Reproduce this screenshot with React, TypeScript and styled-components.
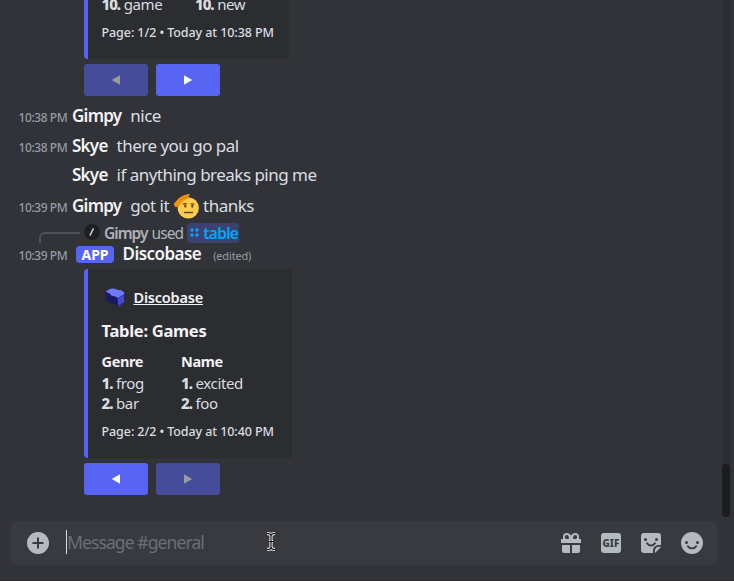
import React from 'react';
import styled, { createGlobalStyle } from 'styled-components';

const GlobalStyle = createGlobalStyle`
  * { box-sizing: border-box; }
  body {
    margin: 0;
    background: #323338;
    color: #dbdee1;
    font-family: "Noto Sans", "Open Sans", sans-serif;
  }
  svg { display: block; flex: none; }
`;

const Page = styled.div`
  display: flex;
  flex-direction: column;
  width: 734px;
  height: 581px;
  overflow: hidden;
  border-bottom: 1px solid #33252e;
`;

const Feed = styled.div`
  display: flex;
  height: 517px;
  flex: none;
`;

const Messages = styled.main`
  width: 722px;
  display: flex;
  flex-direction: column;
`;

const ScrollTrack = styled.div`
  width: 8px;
  display: flex;
  align-items: flex-end;
  background: #2c2d32;
  border-radius: 0 0 4px 4px;
`;

const ScrollThumb = styled.div`
  width: 8px;
  height: 53px;
  border-radius: 4px;
  background: #1b1c1f;
`;

const MessageRow = styled.div<{ $height: number }>`
  display: flex;
  align-items: baseline;
  height: ${(p) => p.$height}px;
  line-height: ${(p) => p.$height}px;
  white-space: nowrap;
`;

const Timestamp = styled.time`
  width: 72px;
  flex: none;
  padding-left: 18.5px;
  font-size: 12px;
  font-weight: 500;
  letter-spacing: -0.42px;
  color: #949ba4;
`;

const Author = styled.span<{ $tracking?: number }>`
  margin-right: 9px;
  font-size: 17px;
  font-weight: 600;
  letter-spacing: ${(p) => p.$tracking ?? -0.75}px;
  color: #f2f3f5;
`;

const Body = styled.span`
  font-size: 17px;
  letter-spacing: -0.52px;
`;

const ReplyRow = styled.div`
  display: flex;
  align-items: center;
  height: 20px;
  padding-left: 39px;
  line-height: 20px;
  font-size: 15.5px;
  white-space: nowrap;
  color: #aeb2b8;
`;

const ReplySpine = styled.div`
  align-self: flex-end;
  width: 41px;
  height: 11px;
  margin: 0 4px -1px 0;
  border: solid #4e5058;
  border-width: 2px 0 0 2px;
  border-radius: 6px 0 0 0;
`;

const ReplyText = styled.span<{ $strong?: boolean }>`
  padding-top: 2px;
  font-weight: ${(p) => (p.$strong ? 600 : 400)};
  letter-spacing: ${(p) => (p.$strong ? -1 : -0.85)}px;
  margin-left: 4px;
`;

const Command = styled.span`
  display: flex;
  align-items: center;
  gap: 4px;
  width: 52px;
  height: 20px;
  margin: 1px 0 0 4px;
  padding-left: 3px;
  border-radius: 3px;
  background: #3c4270;
  color: #00a8fc;
  font-weight: 600;
  letter-spacing: -0.75px;
`;

const AppTag = styled.span`
  width: 38px;
  height: 17px;
  margin: 0 8.5px 0 4px;
  border-radius: 4px;
  background: #5865f2;
  color: #fff;
  font-size: 14px;
  font-weight: 700;
  line-height: 17px;
  text-align: center;
`;

const Edited = styled.span`
  margin-left: 3px;
  font-size: 11px;
  letter-spacing: -0.15px;
  color: #949ba4;
`;

const Card = styled.section<{ $width: number; $height: number; $continued?: boolean }>`
  display: flex;
  flex: none;
  flex-direction: column;
  justify-content: flex-end;
  width: ${(p) => p.$width}px;
  height: ${(p) => p.$height}px;
  margin: ${(p) => (p.$continued ? 0 : 4)}px 0 0 84px;
  padding: 0 0 8px 13.5px;
  border-left: 4px solid #5865f2;
  border-radius: ${(p) => (p.$continued ? '0 0 4px 4px' : '4px')};
  background: #2c2d31;
  white-space: nowrap;
`;

const CardAuthor = styled.div`
  display: flex;
  align-items: center;
  gap: 9px;
  height: 23px;
  padding-left: 3px;
  line-height: 23px;
`;

const CardLink = styled.a`
  font-size: 14.5px;
  font-weight: 600;
  letter-spacing: -0.2px;
  color: #f2f3f5;
  text-decoration: underline;
  text-decoration-thickness: 1px;
  text-underline-offset: 1px;
`;

const CardTitle = styled.h2`
  margin: 0;
  font-size: 16.5px;
  font-weight: 700;
  line-height: 43px;
  letter-spacing: -0.28px;
  color: #f2f3f5;
`;

const Fields = styled.div<{ $column: number }>`
  display: grid;
  grid-template-columns: ${(p) => p.$column}px auto;
`;

const FieldName = styled.div`
  margin-bottom: 2px;
  font-size: 14.5px;
  font-weight: 700;
  line-height: 19px;
  letter-spacing: -0.35px;
  color: #f2f3f5;
`;

const Entry = styled.div`
  height: 20px;
  font-size: 15px;
  line-height: 20px;
  letter-spacing: -0.35px;
`;

const Ordinal = styled.b`
  margin-right: 3.5px;
  font-weight: 800;
  letter-spacing: -1px;
`;

const CardFooter = styled.div`
  height: 37px;
  font-size: 12.5px;
  font-weight: 500;
  line-height: 38px;
  letter-spacing: -0.08px;
`;

const Pager = styled.div<{ $gap: number }>`
  display: flex;
  gap: 8px;
  margin: 5px 0 ${(p) => p.$gap}px 84px;
`;

const PagerButton = styled.button`
  display: flex;
  align-items: center;
  justify-content: center;
  width: 64px;
  height: 32px;
  padding: 0;
  border: 0;
  border-radius: 3px;
  background: #5865f2;
  color: #fff;
  &:disabled { background: #454c9a; color: #9a9b9f; }
`;

const Composer = styled.div`
  display: flex;
  align-items: center;
  flex: none;
  width: 708px;
  height: 44px;
  margin: 4px 0 0 10px;
  padding: 0 15px 0 17px;
  border-radius: 8px;
  background: #383a40;
  color: #b5bac1;
`;

const Caret = styled.span`
  width: 1px;
  height: 24px;
  margin: -2px 0 0 17px;
  background: #dbdee1;
`;

const Placeholder = styled.span`
  width: 199px;
  margin-top: -3px;
  font-size: 17.5px;
  line-height: 24px;
  letter-spacing: -0.9px;
  white-space: nowrap;
  color: #6b6e76;
`;

const Pointer = styled.span`
  margin-top: -4px;
`;

const Actions = styled.div`
  display: flex;
  align-items: center;
  gap: 20px;
  margin-left: auto;
`;

const GifBadge = styled.span`
  display: flex;
  align-items: center;
  justify-content: center;
  width: 20px;
  height: 20px;
  border-radius: 3px;
  background: #b5bac1;
  color: #383a40;
  font-size: 10px;
  font-weight: 800;
`;

function Arrow({ back }: { back?: boolean }) {
  return (
    <svg width="10" height="10" viewBox="0 0 10 10">
      <path d={back ? 'M9 .2v9.6L.8 5z' : 'M1 .2v9.6L9.2 5z'} fill="currentColor" />
    </svg>
  );
}

function PagerRow({ first, gap }: { first: boolean; gap: number }) {
  return (
    <Pager $gap={gap}>
      <PagerButton disabled={first} aria-label="Previous page"><Arrow back /></PagerButton>
      <PagerButton disabled={!first} aria-label="Next page"><Arrow /></PagerButton>
    </Pager>
  );
}

const EmojiSlot = styled.span`
  align-self: flex-start;
  padding-top: 5px;
  margin: 0 4px 0 5px;
`;

function Salute() {
  return (
    <svg width="25" height="25" viewBox="0 0 25 25">
      <circle cx="14.3" cy="14" r="10.6" fill="#ffcc4d" />
      <path d="M8.8 10.3c1.300-.8 3-.8 4.200-.2M16.500 10c1.400-.5 2.900-.3 4 .4" fill="none" stroke="#664500" strokeWidth="1.100" />
      <ellipse cx="11.300" cy="12" rx="1.100" ry="1.700" fill="#664500" />
      <ellipse cx="18.300" cy="12" rx="1.100" ry="1.700" fill="#664500" />
      <path d="M10.500 18.500h8" stroke="#664500" strokeWidth="1.400" strokeLinecap="round" />
      <path d="M0 9.500 5 4 9.800 1.300 14.800 0c1.200.1 1.400 1.400.3 1.900l-1 .6c1 .4.8 1.500-.2 1.900L9.500 6.600 4.500 12.200 2 13.200C.7 13 0 11.500 0 9.500z" fill="#f4900c" />
      <path d="M6.500 6 13 2.800" stroke="#d66f08" strokeWidth=".7" />
    </svg>
  );
}

function CubeLogo() {
  return (
    <svg width="20" height="20" viewBox="0 0 20 20">
      <path d="M.5 3.500 5.500 1l13.700 3.500L19 14.500l-5.800 4.200-3-2.700-4-.5L1 11.500z" fill="#171b63" />
      <path d="m12.500 9 6.700-4.500-.2 10-5.800 4.200z" fill="#3a40bd" />
      <path d="M.5 3.500 5.500.8 9 .4l4 1.600 3.200.2 3 2.300v1.600L13 9.800 9.500 8.200 6.800 7.800 4.500 5.600z" fill="#6f78ff" />
      <path d="m13.200 12.700 5.800-3.800M13.200 15.700l5.800-3.700" stroke="#5c64ef" strokeWidth=".9" />
    </svg>
  );
}

function SlashAvatar() {
  return (
    <svg width="16" height="16" viewBox="0 0 16 16">
      <circle cx="8" cy="8" r="8" fill="#1e1f22" />
      <path d="m5.900 11.600 3.600-7.200" stroke="#c8cbd0" strokeWidth="1.500" />
    </svg>
  );
}

function CommandDots() {
  return (
    <svg width="9" height="9" viewBox="0 0 9 9" fill="#00a8fc">
      <circle cx="2" cy="2" r="1.700" />
      <circle cx="7" cy="2" r="1.700" />
      <circle cx="2" cy="7" r="1.700" />
      <circle cx="7" cy="7" r="1.700" />
    </svg>
  );
}

function PlusIcon() {
  return (
    <svg width="22" height="22" viewBox="0 0 22 22">
      <circle cx="11" cy="11" r="11" fill="currentColor" />
      <path d="M11 5.500v11M5.500 11h11" stroke="#383a40" strokeWidth="2" />
    </svg>
  );
}

function IBeam() {
  const beam = 'M1 1.700h1.500Q5 1.700 5 4v11q0 2.300-2.500 2.300H1M9 1.700H7.500Q5 1.700 5 4m0 11q0 2.300 2.500 2.300H9M3 9.600h4';
  return (
    <svg width="10" height="19" viewBox="0 0 10 19" fill="none">
      <path d={beam} stroke="#fff" strokeWidth="3" />
      <path d={beam} stroke="#151515" strokeWidth="1.200" />
    </svg>
  );
}

function GiftIcon() {
  return (
    <svg width="20" height="22" viewBox="0 0 20 22" fill="currentColor">
      <path fillRule="evenodd" d="M2 7V4.500C2 2.300 3.500 1 5.700 1 7.700 1 9 2 10 3.500 11 2 12.300 1 14.300 1 16.500 1 18 2.300 18 4.500V7h2v4H0V7zM5.800 3a2 2 0 1 0 0 4h1.900c.6-1.800-.2-4-1.900-4zm8.400 0c-1.700 0-2.500 2.200-1.900 4h1.900a2 2 0 1 0 0-4z" />
      <path d="M1 13h8v8H3a2 2 0 0 1-2-2zM11 13h8v6a2 2 0 0 1-2 2h-6z" />
    </svg>
  );
}

function StickerIcon() {
  return (
    <svg width="20" height="20" viewBox="0 0 20 20">
      <path d="M3 0h14a3 3 0 0 1 3 3v9h-2c-3.500 0-6 2.500-6 6v2H3a3 3 0 0 1-3-3V3a3 3 0 0 1 3-3z" fill="currentColor" />
      <path d="M20 13.800V14l-6 6h-.2V18c0-2.400 1.800-4.200 4.200-4.200z" fill="currentColor" />
      <circle cx="4.500" cy="6.500" r="1.500" fill="#383a40" />
      <circle cx="15.500" cy="6.500" r="1.500" fill="#383a40" />
      <path d="M6 10.300c1.800 3 6.200 3 8 0" fill="none" stroke="#383a40" strokeWidth="1.800" strokeLinecap="round" />
    </svg>
  );
}

function SmileIcon() {
  return (
    <svg width="22" height="22" viewBox="0 0 22 22">
      <circle cx="11" cy="11" r="11" fill="currentColor" />
      <circle cx="5.500" cy="10.500" r="1.500" fill="#383a40" />
      <circle cx="16.500" cy="10.500" r="1.500" fill="#383a40" />
      <path d="M6.800 14.200c1.900 3 6.500 3 8.400 0" fill="none" stroke="#383a40" strokeWidth="1.800" strokeLinecap="round" />
    </svg>
  );
}

export default function App() {
  return (
    <>
      <GlobalStyle />
      <Page>
        <Feed>
          <Messages>
            <Card $width={205} $height={59} $continued>
              <Fields $column={93.5}>
                <Entry><Ordinal>10.</Ordinal>game</Entry>
                <Entry><Ordinal>10.</Ordinal>new</Entry>
              </Fields>
              <CardFooter>Page: 1/2 • Today at 10:38 PM</CardFooter>
            </Card>
            <PagerRow first gap={5} />

            <MessageRow $height={29}>
              <Timestamp>10:38 PM</Timestamp><Author>Gimpy</Author><Body>nice</Body>
            </MessageRow>
            <MessageRow $height={31}>
              <Timestamp>10:38 PM</Timestamp><Author>Skye</Author><Body>there you go pal</Body>
            </MessageRow>
            <MessageRow $height={28}>
              <Timestamp /><Author>Skye</Author><Body>if anything breaks ping me</Body>
            </MessageRow>
            <MessageRow $height={33}>
              <Timestamp>10:39 PM</Timestamp><Author>Gimpy</Author><Body>got it</Body>
              <EmojiSlot><Salute /></EmojiSlot><Body>thanks</Body>
            </MessageRow>

            <ReplyRow>
              <ReplySpine />
              <SlashAvatar />
              <ReplyText $strong>Gimpy</ReplyText>
              <ReplyText>used</ReplyText>
              <Command><CommandDots />table</Command>
            </ReplyRow>
            <MessageRow $height={23}>
              <Timestamp>10:39 PM</Timestamp>
              <AppTag>APP</AppTag>
              <Author $tracking={-0.55}>Discobase</Author>
              <Edited>(edited)</Edited>
            </MessageRow>

            <Card $width={208} $height={189}>
              <CardAuthor><CubeLogo /><CardLink>Discobase</CardLink></CardAuthor>
              <CardTitle>Table: Games</CardTitle>
              <Fields $column={79.5}>
                <div>
                  <FieldName>Genre</FieldName>
                  <Entry><Ordinal>1.</Ordinal>frog</Entry>
                  <Entry><Ordinal>2.</Ordinal>bar</Entry>
                </div>
                <div>
                  <FieldName>Name</FieldName>
                  <Entry><Ordinal>1.</Ordinal>excited</Entry>
                  <Entry><Ordinal>2.</Ordinal>foo</Entry>
                </div>
              </Fields>
              <CardFooter>Page: 2/2 • Today at 10:40 PM</CardFooter>
            </Card>
            <PagerRow first={false} gap={0} />
          </Messages>
          <ScrollTrack><ScrollThumb /></ScrollTrack>
        </Feed>

        <Composer>
          <PlusIcon />
          <Caret />
          <Placeholder>Message #general</Placeholder>
          <Pointer><IBeam /></Pointer>
          <Actions>
            <GiftIcon />
            <GifBadge>GIF</GifBadge>
            <StickerIcon />
            <SmileIcon />
          </Actions>
        </Composer>
      </Page>
    </>
  );
}
